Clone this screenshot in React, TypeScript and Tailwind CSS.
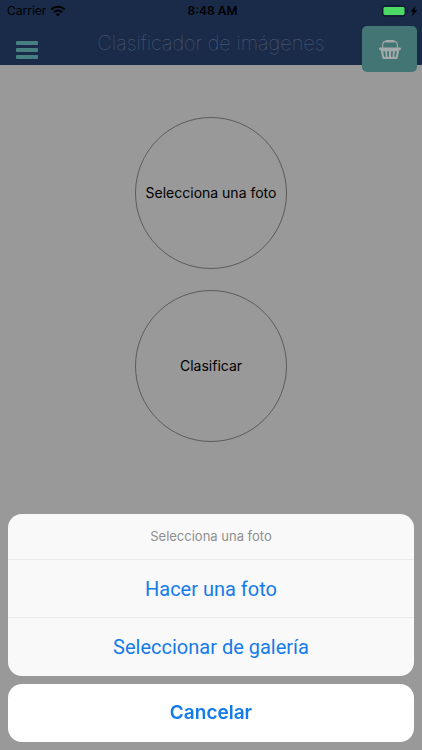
import { useState } from "react";
import clsx from "clsx";

function WifiIcon() {
  return (
    <svg viewBox="0 0 16 12" className="h-3 w-4" aria-hidden="true">
      <g fill="none" stroke="currentColor" strokeWidth="2.1">
        <path d="M1.4 4.4a9.4 9.4 0 0 1 13.2 0" />
        <path d="M4 7.2a5.7 5.7 0 0 1 8 0" />
      </g>
      <path d="M8 11.6 5.8 9.3a3.2 3.2 0 0 1 4.4 0z" fill="currentColor" />
    </svg>
  );
}

function BatteryIcon() {
  return (
    <svg viewBox="0 0 36 12" className="h-3 w-9" aria-hidden="true">
      <rect x=".5" y=".9" width="23" height="10.2" rx="2.6" fill="none" stroke="#0c1626" />
      <rect x="1.5" y="2" width="21" height="8" rx="1.4" fill="#4cd964" />
      <path d="M25 4.2c1.6.6 1.6 3 0 3.6z" fill="#0c1626" />
      <path d="M33.6.8 28.6 6.8h2.7L30 11.4l5.2-6.4h-2.8z" fill="#000" />
    </svg>
  );
}

function BasketIcon() {
  return (
    <svg viewBox="0 0 24 22" className="h-[22px] w-6" aria-hidden="true">
      <path
        d="M4.6 10V7.2Q4.6 3.4 8.4 3.4h7.2q3.8 0 3.8 3.8V10"
        fill="none"
        stroke="currentColor"
        strokeWidth="1.1"
      />
      <rect x="7.4" y="2" width="9.2" height="2.4" rx="1.2" fill="currentColor" />
      <rect x="1" y="9.6" width="22" height="2.4" rx="1.1" fill="currentColor" />
      <path
        fillRule="evenodd"
        fill="currentColor"
        d="M2.6 11.5h18.8l-1.7 8.3q-.3 1.2-1.5 1.2H5.8q-1.2 0-1.5-1.2zM5.2 13.3l.9 5.4h1.6l-.6-5.4zM9.1 13.3l.3 5.4H11l-.1-5.4zM13.1 13.3 13 18.7h1.6l.3-5.4zM16.9 13.3l-.6 5.4h1.6l.9-5.4z"
      />
    </svg>
  );
}

function StatusBar() {
  return (
    <div className="grid h-[22px] grid-cols-[1fr_auto_1fr] items-center pr-1 pl-[7px] text-xs text-black">
      <div className="flex items-center gap-1">
        <span>Carrier</span>
        <WifiIcon />
      </div>
      <span className="text-center font-semibold">8:48 AM</span>
      <div className="flex justify-end">
        <BatteryIcon />
      </div>
    </div>
  );
}

function Header() {
  return (
    <header className="h-[65px] bg-[#1a2b49]">
      <StatusBar />
      <div className="grid grid-cols-[1fr_auto_1fr] items-start">
        <button
          type="button"
          aria-label="Menú"
          className="mt-[19px] ml-4 flex w-[22px] flex-col gap-[3px]"
        >
          <span className="h-1 w-full rounded-[1px] bg-[#478080]" />
          <span className="h-1 w-full rounded-[1px] bg-[#478080]" />
          <span className="h-1 w-full rounded-[1px] bg-[#478080]" />
        </button>
        <h1 className="mt-[9px] text-xl leading-6 font-thin text-[#56637d]">
          Clasificador de imágenes
        </h1>
        <button
          type="button"
          aria-label="Cesta"
          className="mt-1 mr-[5px] flex h-[46px] w-[55px] items-center justify-center justify-self-end rounded-[5px] bg-[#427573] text-[#a3a9a8]"
        >
          <BasketIcon />
        </button>
      </div>
    </header>
  );
}

function CircleButton({ label, onClick }: { label: string; onClick?: () => void }) {
  return (
    <button
      type="button"
      onClick={onClick}
      className="size-[152px] rounded-full border border-[#5c5c5c] text-sm text-black"
    >
      {label}
    </button>
  );
}

function SheetButton({
  label,
  bold,
  onClick,
}: {
  label: string;
  bold?: boolean;
  onClick: () => void;
}) {
  return (
    <button
      type="button"
      onClick={onClick}
      className={clsx(
        "block h-[58px] w-full text-[#147bea]",
        bold ? "text-[19px] font-semibold" : "font-['Roboto','Inter',sans-serif] text-xl"
      )}
    >
      {label}
    </button>
  );
}

function ActionSheet({ onClose }: { onClose: () => void }) {
  return (
    <div
      role="dialog"
      aria-labelledby="sheet-title"
      className="fixed inset-x-0 bottom-0 px-2 pb-2"
    >
      <div className="divide-y divide-[#ebebeb] overflow-hidden rounded-[14px] bg-[#f9f9f9]">
        <h2
          id="sheet-title"
          className="flex h-[46px] items-center justify-center text-[13px] text-[#8f8f8f]"
        >
          Selecciona una foto
        </h2>
        <SheetButton label="Hacer una foto" onClick={onClose} />
        <SheetButton label="Seleccionar de galería" onClick={onClose} />
      </div>
      <div className="mt-2 overflow-hidden rounded-[14px] bg-white">
        <SheetButton label="Cancelar" bold onClick={onClose} />
      </div>
    </div>
  );
}

export default function App() {
  const [sheetOpen, setSheetOpen] = useState(true);

  return (
    <div className="min-h-screen bg-[#999999] font-['Inter','Liberation_Sans',sans-serif]">
      <Header />
      <main className="flex flex-col items-center gap-[21px] pt-[52px]">
        <CircleButton label="Selecciona una foto" onClick={() => setSheetOpen(true)} />
        <CircleButton label="Clasificar" />
      </main>
      {sheetOpen && <ActionSheet onClose={() => setSheetOpen(false)} />}
    </div>
  );
}
